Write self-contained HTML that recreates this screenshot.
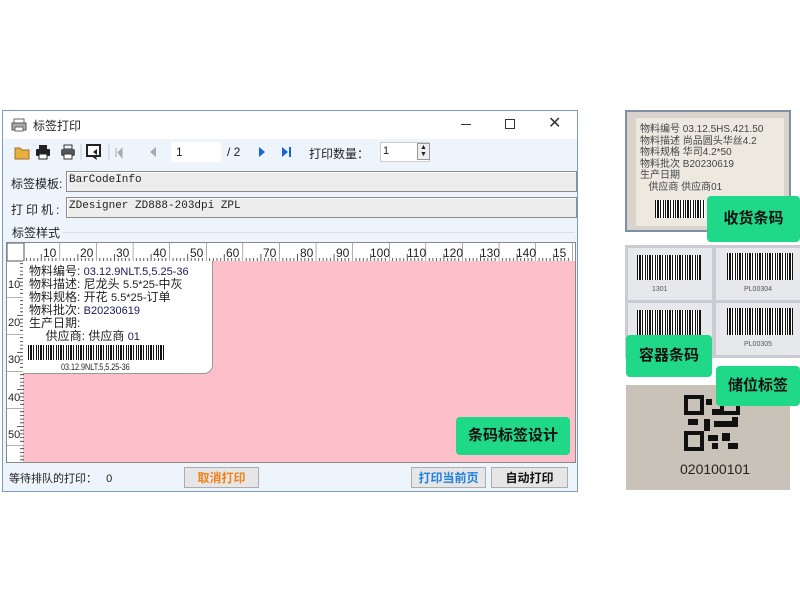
<!DOCTYPE html>
<html><head><meta charset="utf-8"><style>
*{margin:0;padding:0;box-sizing:border-box}
body{width:800px;height:600px;background:#fff;position:relative;overflow:hidden;font-family:"Liberation Sans","Noto Sans CJK SC",sans-serif;color:#222}
.a{position:absolute}
.win{left:2px;top:110px;width:576px;height:382px;border:1px solid #7a9cc6;background:#eef4fb}
.title{left:0;top:0;width:574px;height:28px;background:#fff;font-size:12px}
.inp{background:#ededed;border:1px solid #8c8c8c;box-shadow:inset 1px 1px 0 #fff;font-family:"Liberation Mono","Noto Sans CJK SC",monospace;font-size:11px;padding:2px 2px}
.lbl{font-size:12px}
.btn{border:1px solid #adadad;background:#e6e6e6;font-size:12px;font-weight:bold;text-align:center;line-height:20px}
.green{background:#1fd888;color:#111;font-weight:bold;font-size:15px;text-align:center;border-radius:4px}
.bar{background:repeating-linear-gradient(90deg,#111 0 1px,#fff 1px 2px,#111 2px 4px,#fff 4px 5px,#111 5px 6px,#fff 6px 8px,#111 8px 9px,#fff 9px 10px)}
.card{font-size:12px}
.card div{height:13px;line-height:13px;white-space:nowrap;overflow:visible}
.card b{font-weight:normal;color:#1a1a5a;font-size:11px}
</style></head><body>
<div class="a win">
  <div class="a title">
    <svg class="a" style="left:8px;top:7px" width="16" height="14"><rect x="3" y="1" width="10" height="5" fill="#fff" stroke="#666"/><rect x="1" y="5" width="14" height="7" fill="#aaa" stroke="#555"/><rect x="4" y="9" width="8" height="4" fill="#fff" stroke="#666"/></svg>
    <div class="a" style="left:30px;top:6px;font-size:12px">标签打印</div>
    <div class="a" style="left:458px;top:13px;width:10px;height:1px;background:#333"></div>
    <div class="a" style="left:502px;top:8px;width:10px;height:10px;border:1px solid #333"></div>
    <div class="a" style="left:545px;top:2px;font-size:16px;color:#333">✕</div>
  </div>
  <svg class="a" style="left:10px;top:31px" width="112" height="20">
    <path d="M2 6h5l2 2h7v9H2z" fill="#e8b040" stroke="#a07020"/>
    <rect x="26" y="3" width="8" height="5" fill="#222"/><rect x="23" y="7" width="14" height="7" rx="1" fill="#222"/><rect x="26" y="12" width="8" height="5" fill="#fff" stroke="#222"/>
    <rect x="51" y="3" width="8" height="4" fill="none" stroke="#333"/><rect x="48" y="7" width="14" height="7" rx="2" fill="#555"/><rect x="51" y="12" width="8" height="5" fill="#fff" stroke="#333"/>
    <line x1="68" y1="2" x2="68" y2="18" stroke="#ccc"/>
    <rect x="74" y="3" width="13" height="11" fill="#fff" stroke="#222" stroke-width="2"/><path d="M78 14l6 4 -1-4z" fill="#222"/><path d="M80 10l4-3v6z" fill="#222"/>
    <line x1="96" y1="2" x2="96" y2="18" stroke="#ccc"/>
    <path d="M103 6v9M105 10.5l4-4v9z" stroke="#aaa" fill="#aaa"/>
  </svg>
  <svg class="a" style="left:145px;top:33px" width="10" height="16"><path d="M8 3v10l-6-5z" fill="#aaa"/></svg>
  <div class="a" style="left:168px;top:31px;width:50px;height:20px;background:#fff"></div>
  <div class="a lbl" style="left:173px;top:34px">1</div>
  <div class="a lbl" style="left:224px;top:34px">/ 2</div>
  <svg class="a" style="left:252px;top:33px" width="40" height="16"><path d="M4 3v10l6-5z" fill="#1565d8"/><path d="M27 3v10l6-5z" fill="#1565d8"/><rect x="34" y="3" width="2" height="10" fill="#1565d8"/></svg>
  <div class="a lbl" style="left:306px;top:34px">打印数量：</div>
  <div class="a" style="left:377px;top:31px;width:50px;height:20px;background:#fff;border:1px solid #ccc"></div>
  <div class="a lbl" style="left:380px;top:34px;font-size:11px">1</div>
  <div class="a" style="left:414px;top:32px;width:13px;height:17px;background:#eee;border:1px solid #999;font-size:7px;line-height:7px;text-align:center">▲<br>▼</div>
  <div class="a lbl" style="left:8px;top:64px">标签模板:</div>
  <div class="a inp" style="left:63px;top:60px;width:511px;height:21px">BarCodeInfo</div>
  <div class="a lbl" style="left:8px;top:90px;letter-spacing:3px">打印机:</div>
  <div class="a inp" style="left:63px;top:86px;width:511px;height:21px">ZDesigner ZD888-203dpi ZPL</div>
  <div class="a lbl" style="left:9px;top:113px">标签样式</div>
  <div class="a" style="left:60px;top:121px;width:512px;height:1px;background:#d8e0ea"></div>
  <div class="a" style="left:3px;top:131px;width:570px;height:221px;background:#fff;border:1px solid #888"></div>
  <div class="a" style="left:20px;top:150px;width:552px;height:201px;background:#fdbfca"></div>
  <svg class="a" style="left:4px;top:132px" width="568" height="219">
    <defs>
      <pattern id="ht" x="16" y="0" width="36.6" height="19" patternUnits="userSpaceOnUse">
        <path d="M0 0V18M3.66 15V18M7.32 15V18M10.98 15V18M14.64 15V18M18.3 11V18M21.96 15V18M25.62 15V18M29.28 15V18M32.94 15V18" stroke="#333" stroke-width="0.8"/>
      </pattern>
      <pattern id="vt" x="0" y="17" width="17" height="37" patternUnits="userSpaceOnUse">
        <path d="M0 0H17M13 3.7H17M13 7.4H17M13 11.1H17M13 14.8H17M10 18.5H17M13 22.2H17M13 25.9H17M13 29.6H17M13 33.3H17" stroke="#333" stroke-width="0.8"/>
      </pattern>
    </defs>
    <rect x="16" y="0" width="552" height="18" fill="url(#ht)"/>
    <rect x="0" y="18" width="17" height="201" fill="url(#vt)"/>
    <rect x="0" y="0" width="17" height="18" fill="#fff" stroke="#555"/>
    <g font-size="12" fill="#222" font-family="Liberation Sans">
      <text x="36" y="14">10</text><text x="73" y="14">20</text><text x="109" y="14">30</text><text x="146" y="14">40</text><text x="183" y="14">50</text><text x="219" y="14">60</text><text x="256" y="14">70</text><text x="293" y="14">80</text><text x="329" y="14">90</text><text x="363" y="14">100</text><text x="400" y="14">110</text><text x="436" y="14">120</text><text x="473" y="14">130</text><text x="509" y="14">140</text><text x="546" y="14">15</text>
    </g>
    <g font-size="11" fill="#222" font-family="Liberation Sans">
      <text x="1" y="158">40</text>
    </g>
  </svg>
  <div class="a" style="left:5px;top:168px;font-size:11px">10</div>
  <div class="a" style="left:5px;top:206px;font-size:11px">20</div>
  <div class="a" style="left:5px;top:243px;font-size:11px">30</div>
  <div class="a" style="left:5px;top:318px;font-size:11px">50</div>
  <div class="a" style="left:20px;top:150px;width:190px;height:113px;background:#fff;border-bottom-right-radius:9px;border-right:1px solid #999;border-bottom:1px solid #999"></div>
  <div class="a card" style="left:26px;top:154px">
    <div>物料编号: <b>03.12.9NLT.5,5.25-36</b></div>
    <div>物料描述: 尼龙头 <b style="color:#222">5.5*25-</b>中灰</div>
    <div>物料规格: 开花 <b style="color:#222">5.5*25-</b>订单</div>
    <div>物料批次: <b>B20230619</b></div>
    <div>生产日期:</div>
    <div>&nbsp;&nbsp;&nbsp;&nbsp;&nbsp;供应商: 供应商 <b>01</b></div>
  </div>
  <div class="a bar" style="left:25px;top:234px;width:137px;height:15px"></div>
  <div class="a" style="left:58px;top:251px;font-size:9px;transform:scaleX(.8);transform-origin:left">03.12.9NLT.5,5.25-36</div>
  <div class="a green" style="left:453px;top:306px;width:114px;height:38px;line-height:38px">条码标签设计</div>
  <div class="a lbl" style="left:6px;top:359px;font-size:11px">等待排队的打印：&nbsp;&nbsp;&nbsp;0</div>
  <div class="a btn" style="left:181px;top:356px;width:75px;height:21px;color:#f08018">取消打印</div>
  <div class="a btn" style="left:408px;top:356px;width:75px;height:21px;color:#2080e0">打印当前页</div>
  <div class="a btn" style="left:488px;top:356px;width:77px;height:21px;color:#111">自动打印</div>
</div>
<div class="a" style="left:625px;top:110px;width:166px;height:122px;background:#d8d4cc;border:2px solid #8090a4"></div>
<div class="a" style="left:636px;top:118px;width:148px;height:108px;background:#ede9e0;font-size:10px;line-height:11.5px;color:#444;padding:6px 4px">物料编号 03.12.5HS.421.50<br>物料描述 尚品圆头华丝4.2<br>物料规格 华司4.2*50<br>物料批次 B20230619<br>生产日期<br>&nbsp;&nbsp;&nbsp;供应商 供应商01</div>
<div class="a bar" style="left:655px;top:200px;width:50px;height:18px"></div>
<div class="a green" style="left:707px;top:196px;width:93px;height:46px;line-height:46px">收货条码</div>
<div class="a" style="left:625px;top:245px;width:175px;height:113px;background:#c9cdd3"></div>
<div class="a" style="left:628px;top:248px;width:84px;height:52px;background:#e6e8ec"></div>
<div class="a" style="left:716px;top:248px;width:84px;height:52px;background:#e6e8ec"></div>
<div class="a" style="left:628px;top:303px;width:84px;height:52px;background:#e6e8ec"></div>
<div class="a" style="left:716px;top:303px;width:84px;height:52px;background:#e6e8ec"></div>
<div class="a bar" style="left:637px;top:255px;width:64px;height:25px"></div>
<div class="a bar" style="left:727px;top:253px;width:66px;height:27px"></div>
<div class="a bar" style="left:637px;top:310px;width:64px;height:25px"></div>
<div class="a bar" style="left:727px;top:308px;width:66px;height:27px"></div>
<div class="a" style="left:652px;top:286px;font-size:7px;color:#555">1301</div>
<div class="a" style="left:744px;top:286px;font-size:7px;color:#555">PL00304</div>
<div class="a" style="left:744px;top:341px;font-size:7px;color:#555">PL00305</div>
<div class="a green" style="left:626px;top:335px;width:86px;height:42px;line-height:42px">容器条码</div>
<div class="a" style="left:626px;top:385px;width:164px;height:105px;background:#c8c2b8"></div>
<svg class="a" style="left:684px;top:395px" width="56" height="56"><rect x="2" y="2" width="16" height="16" fill="none" stroke="#111" stroke-width="4"/><rect x="38" y="2" width="16" height="16" fill="none" stroke="#111" stroke-width="4"/><rect x="2" y="38" width="16" height="16" fill="none" stroke="#111" stroke-width="4"/><path d="M22 4h6v6h-6zM28 14h8v6h-8zM4 24h10v6H4zM20 24h6v12h-6zM30 26h20v6H30zM24 40h10v6H24zM38 38h8v8h-8zM44 48h10v6H44zM28 48h6v6h-6zM48 22h6v10h-6z" fill="#111"/></svg>
<div class="a" style="left:680px;top:461px;font-size:14px;color:#222">020100101</div>
<div class="a green" style="left:716px;top:366px;width:84px;height:40px;line-height:40px">储位标签</div>
</body></html>
